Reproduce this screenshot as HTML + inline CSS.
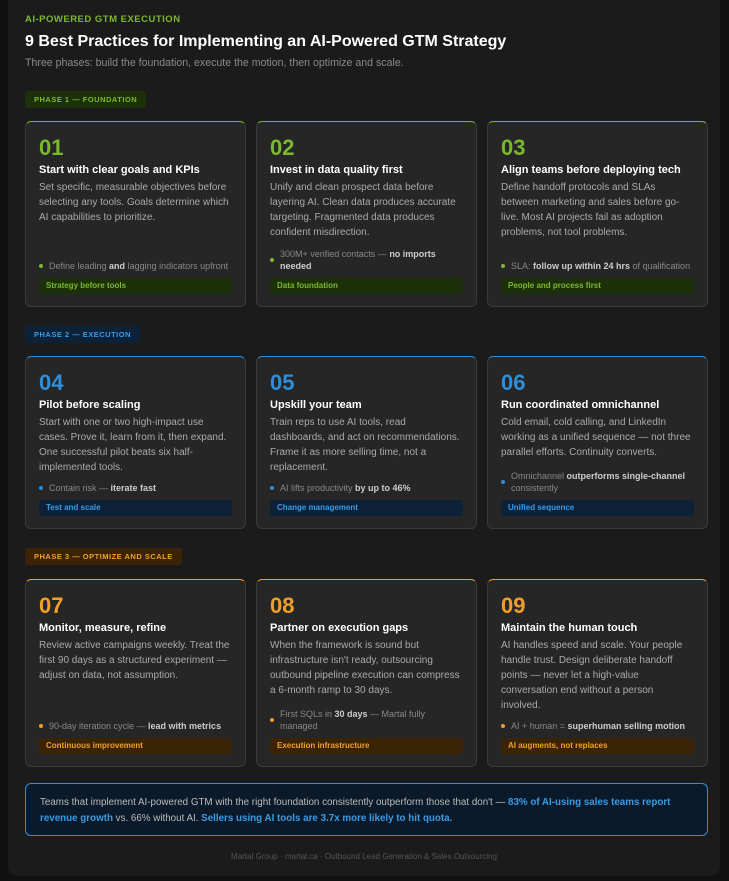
<!DOCTYPE html>
<html><head><meta charset="utf-8"><style>
*{box-sizing:border-box;margin:0;padding:0}
body{background:#111;width:729px;height:881px;font-family:"Liberation Sans",sans-serif;overflow:hidden}
.wrap{position:absolute;left:8px;top:0;width:712px;height:876px;background:#1b1b1b;border-radius:0 0 10px 10px;padding:0 17px}
.eyebrow{position:absolute;top:14px;left:17px;color:#7cb82f;font-size:9.5px;font-weight:bold;letter-spacing:.5px}
h1{position:absolute;top:33px;left:17px;color:#fff;font-size:16px;font-weight:bold}
.sub{position:absolute;top:57px;left:17px;color:#8a8a8a;font-size:10.6px}
.phase{position:absolute;left:17px;height:17px;padding:0 9px;border-radius:3px;font-size:7.5px;font-weight:bold;letter-spacing:.5px;line-height:17px}
.row{position:absolute;left:17px;display:flex;gap:10px}
.card{width:221px;background:#262626;border:1px solid #3a3a3a;border-radius:6px;padding:14px 13px 12px;display:flex;flex-direction:column}
.num{font-size:22px;font-weight:bold;line-height:24px}
.t{color:#fff;font-size:11px;font-weight:bold;margin-top:4px}
.d{color:#aaa;font-size:10px;line-height:15px;margin-top:4px;flex:1}
.b{color:#888;font-size:9px;line-height:12px;padding-left:10px;position:relative;margin-bottom:6px}
.b b{color:#ccc}
.b:before{content:"";position:absolute;left:0;top:50%;margin-top:-2px;width:4px;height:4px;border-radius:50%;background:var(--c)}
.tag{height:16px;border-radius:3px;font-size:8px;font-weight:bold;line-height:16px;padding:0 7px}
.g{--c:#7cb82f}.g .num{color:#7cb82f}.g.card{border-top-color:#7cb82f}.g .tag{background:#1c3009;color:#7cb82f}
.bl{--c:#2e8fd8}.bl .num{color:#2e8fd8}.bl.card{border-top-color:#2e8fd8}.bl .tag{background:#0d2238;color:#3a9be6}
.o{--c:#f0a028}.o .num{color:#f0a028}.o.card{border-top-color:#f0a028}.o .tag{background:#3a2405;color:#f0a028}
.call{position:absolute;left:17px;top:783px;width:683px;height:53px;border:1px solid #2e8fd8;border-radius:6px;background:#0b1a2a;padding:11px 14px;color:#bbb;font-size:9.8px;line-height:16px}
.call span{color:#3a9be6;font-weight:bold}
.foot{position:absolute;top:852px;left:0;width:712px;text-align:center;color:#555;font-size:8px}
</style></head><body><div class="wrap">
<div class="eyebrow">AI-POWERED GTM EXECUTION</div>
<h1>9 Best Practices for Implementing an AI-Powered GTM Strategy</h1>
<div class="sub">Three phases: build the foundation, execute the motion, then optimize and scale.</div>

<div class="phase" style="top:91px;background:#1c3009;color:#7cb82f">PHASE 1 — FOUNDATION</div>
<div class="row" style="top:121px;height:186px">
<div class="card g"><div class="num">01</div><div class="t">Start with clear goals and KPIs</div><div class="d">Set specific, measurable objectives before selecting any tools. Goals determine which AI capabilities to prioritize.</div><div class="b">Define leading <b>and</b> lagging indicators upfront</div><div class="tag">Strategy before tools</div></div>
<div class="card g"><div class="num">02</div><div class="t">Invest in data quality first</div><div class="d">Unify and clean prospect data before layering AI. Clean data produces accurate targeting. Fragmented data produces confident misdirection.</div><div class="b">300M+ verified contacts — <b>no imports needed</b></div><div class="tag">Data foundation</div></div>
<div class="card g"><div class="num">03</div><div class="t">Align teams before deploying tech</div><div class="d">Define handoff protocols and SLAs between marketing and sales before go-live. Most AI projects fail as adoption problems, not tool problems.</div><div class="b">SLA: <b>follow up within 24 hrs</b> of qualification</div><div class="tag">People and process first</div></div>
</div>

<div class="phase" style="top:326px;background:#0d2238;color:#3a9be6">PHASE 2 — EXECUTION</div>
<div class="row" style="top:356px;height:173px">
<div class="card bl"><div class="num">04</div><div class="t">Pilot before scaling</div><div class="d">Start with one or two high-impact use cases. Prove it, learn from it, then expand. One successful pilot beats six half-implemented tools.</div><div class="b">Contain risk — <b>iterate fast</b></div><div class="tag">Test and scale</div></div>
<div class="card bl"><div class="num">05</div><div class="t">Upskill your team</div><div class="d">Train reps to use AI tools, read dashboards, and act on recommendations. Frame it as more selling time, not a replacement.</div><div class="b">AI lifts productivity <b>by up to 46%</b></div><div class="tag">Change management</div></div>
<div class="card bl"><div class="num">06</div><div class="t">Run coordinated omnichannel</div><div class="d">Cold email, cold calling, and LinkedIn working as a unified sequence — not three parallel efforts. Continuity converts.</div><div class="b">Omnichannel <b>outperforms single-channel</b> consistently</div><div class="tag">Unified sequence</div></div>
</div>

<div class="phase" style="top:548px;background:#3a2405;color:#f0a028">PHASE 3 — OPTIMIZE AND SCALE</div>
<div class="row" style="top:579px;height:188px">
<div class="card o"><div class="num">07</div><div class="t">Monitor, measure, refine</div><div class="d">Review active campaigns weekly. Treat the first 90 days as a structured experiment — adjust on data, not assumption.</div><div class="b">90-day iteration cycle — <b>lead with metrics</b></div><div class="tag">Continuous improvement</div></div>
<div class="card o"><div class="num">08</div><div class="t">Partner on execution gaps</div><div class="d">When the framework is sound but infrastructure isn't ready, outsourcing outbound pipeline execution can compress a 6-month ramp to 30 days.</div><div class="b">First SQLs in <b>30 days</b> — Martal fully managed</div><div class="tag">Execution infrastructure</div></div>
<div class="card o"><div class="num">09</div><div class="t">Maintain the human touch</div><div class="d">AI handles speed and scale. Your people handle trust. Design deliberate handoff points — never let a high-value conversation end without a person involved.</div><div class="b">AI + human = <b>superhuman selling motion</b></div><div class="tag">AI augments, not replaces</div></div>
</div>

<div class="call">Teams that implement AI-powered GTM with the right foundation consistently outperform those that don't — <span>83% of AI-using sales teams report revenue growth</span> vs. 66% without AI. <span>Sellers using AI tools are 3.7x more likely to hit quota.</span></div>
<div class="foot">Martal Group · martal.ca · Outbound Lead Generation &amp; Sales Outsourcing</div>
</div></body></html>
